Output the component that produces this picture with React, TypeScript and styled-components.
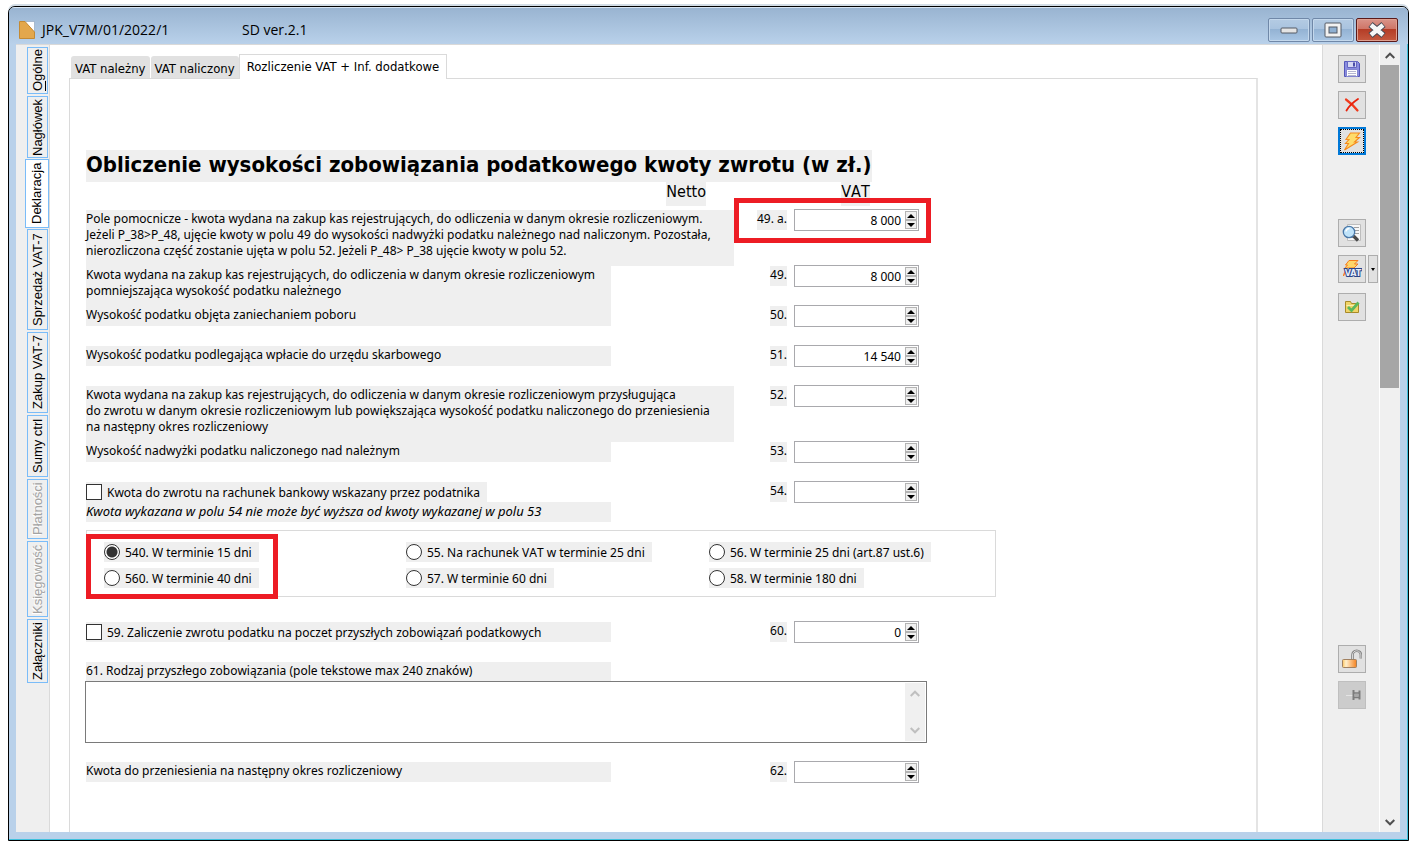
import React, { useState } from 'react';
import styled, { createGlobalStyle, css } from 'styled-components';

const uiFont = `"Noto Sans", Tahoma, sans-serif`;
const condensedFont = `"DejaVu Sans Condensed", "DejaVu Sans", Tahoma, sans-serif`;

const GlobalStyle = createGlobalStyle`
  * { box-sizing: border-box; }
  body { margin: 0; background: #fff; color: #000; font: 12px/16px ${uiFont}; font-kerning: none; }
  button, input, textarea { font: inherit; color: inherit; }
  button { padding: 0; }
`;

const Desktop = styled.div`
  display: flex;
  min-height: 100vh;
  padding: 6px 2px 12px 8px;
`;

const Window = styled.section`
  flex: 1;
  display: flex;
  flex-direction: column;
  min-width: 0;
  border: 1px solid #000;
  border-radius: 7px 7px 0 0;
  background: #b9d1ea;
  box-shadow: 0 -2px 0 #d3dde6;
  overflow: hidden;
`;

const TitleBar = styled.header`
  display: flex;
  align-items: center;
  height: 37px;
  padding: 8px 10px 0 10px;
  border-top: 1px solid #d5e3f2;
  background: linear-gradient(#99b4d1, #b9d1ea);
  font: 14px/20px "Open Sans", "Noto Sans", sans-serif;
  font-kerning: none;
`;

const WindowTitle = styled.h1`
  margin: 0 0 0 7px;
  width: 200px;
  font: inherit;
  font-kerning: none;
`;

const Version = styled.span`
  flex: 1;
`;

const WindowButtons = styled.div`
  display: flex;
  gap: 2px;
`;

const WindowButton = styled.button<{ $danger?: boolean }>`
  display: grid;
  place-items: center;
  width: 42px;
  height: 24px;
  border: 1px solid ${(p) => (p.$danger ? '#5a1a1a' : '#7088a8')};
  border-radius: 2px;
  box-shadow: inset 0 0 0 1px ${(p) => (p.$danger ? '#e0a090' : '#c4d8ec')};
  background: ${(p) =>
    p.$danger
      ? 'linear-gradient(#d9948a 0, #cf7567 45%, #b43c26 46%, #c55a40 100%)'
      : 'linear-gradient(#b4cbe3 0, #a9c3df 45%, #93b2d3 46%, #a9c6e4 100%)'};
`;

const Client = styled.div`
  flex: 1;
  display: flex;
  min-width: 0;
  margin: 0 7px 0 7px;
  border-top: 1px solid #d9d9d9;
  background: #fff;
`;

const Frame = styled.div`
  flex: 1;
  display: flex;
  min-width: 0;
  border-right: 1px solid #3fc0dc;
  border-bottom: 1px solid #3fc0dc;
  padding-bottom: 7px;
`;

const SideNav = styled.nav`
  display: flex;
  flex-direction: column;
  align-items: flex-end;
  gap: 2px;
  width: 34px;
  padding: 2px 1px 0 0;
  border-right: 1px solid #dadada;
  background: #efefef;
`;

const SideTab = styled.button<{ $height: number; $active?: boolean }>`
  width: 21px;
  height: ${(p) => p.$height}px;
  border: 1px solid #7abcf8;
  background: #efefef;
  writing-mode: vertical-rl;
  transform: rotate(180deg);
  font: 13px/19px "Liberation Sans", Arial, sans-serif;
  font-kerning: none;
  white-space: nowrap;
  &:disabled { color: #a3a3a3; text-shadow: -1px -1px 0 #fff; }
  ${(p) =>
    p.$active &&
    css`
      width: 24px;
      margin: -1px -1px -1px 0;
      padding-left: 2px;
      background: #fff;
    `}
`;

const Main = styled.main`
  flex: 1;
  display: flex;
  flex-direction: column;
  min-width: 0;
  padding: 9px 64px 0 19px;
`;

const Tabs = styled.div`
  position: relative;
  display: flex;
  align-items: flex-end;
  height: 25px;
  margin-bottom: -1px;
  padding-left: 1px;
`;

const Tab = styled.button<{ $active?: boolean }>`
  height: 22px;
  margin: 0 1px 1px 1px;
  padding: 3px 4px 0;
  border: 0;
  border-radius: 3px 3px 0 0;
  background: #e1e1e1;
  font: 13px/16px ${condensedFont};
  font-kerning: auto;
  white-space: nowrap;
  & + & { margin-left: 0; }
  ${(p) =>
    p.$active &&
    css`
      height: 25px;
      padding: 0 7px;
      border: 1px solid #dadada;
      border-bottom: 0;
      border-radius: 0;
      background: #fff;
      && { margin: 0 0 0 -1px; }
    `}
`;

const Sheet = styled.form`
  flex: 1;
  border: 1px solid #dadada;
  border-bottom: 0;
  border-right: 2px solid #e4e4e4;
  padding: 71px 16px 30px;
`;

const SheetTitle = styled.h2`
  width: fit-content;
  height: 32px;
  margin: 0;
  background: #efefef;
  font: bold 22px/30px ${condensedFont};
  font-kerning: none;
  white-space: nowrap;
`;

const Row = styled.div<{ $height?: number }>`
  position: relative;
  display: grid;
  grid-template-columns: 648px 53px 125px;
  align-items: start;
  min-height: ${(p) => p.$height ?? 40}px;
`;

const HeadRow = styled(Row)`
  font: 16px/20px ${condensedFont};
  font-kerning: none;
  span { height: 24px; background: #efefef; }
`;

const NettoHead = styled.span`
  justify-self: end;
  margin-right: 28px;
`;

const VatHead = styled.span`
  grid-column: 3;
  justify-self: center;
  margin-left: 12px;
`;

const Caption = styled.label<{ $wide?: boolean; $height?: number }>`
  display: block;
  width: ${(p) => (p.$wide ? 648 : 525)}px;
  height: ${(p) => p.$height ?? 20}px;
  padding-top: 1px;
  background: #efefef;
  white-space: pre;
`;

const Hint = styled(Caption)`
  font-size: 13px;
  font-style: italic;
`;

const Num = styled.label`
  justify-self: end;
  height: 20px;
  padding-top: 1px;
  background: #efefef;
`;

const FieldBox = styled.div`
  display: flex;
  width: 125px;
  height: 22px;
  margin: -1px -7px 0 7px;
  padding: 1px;
  border: 1px solid #a9a9ad;
  background: #fff;
`;

const FieldInput = styled.input`
  flex: 1;
  min-width: 0;
  padding: 2px 4px 0 0;
  border: 0;
  outline: 0;
  background: none;
  text-align: right;
`;

const Spinner = styled.div`
  display: flex;
  flex-direction: column;
  width: 12px;
`;

const SpinButton = styled.button`
  display: grid;
  place-items: center;
  flex: 1;
  min-height: 0;
  border: 1px solid #b4b4b4;
  background: #f0f0f0;
`;

const Choice = styled.label<{ $full?: boolean }>`
  display: flex;
  align-items: flex-start;
  gap: 5px;
  width: ${(p) => (p.$full ? '525px' : 'fit-content')};
  height: 20px;
  padding-right: 7px;
  background: #efefef;
  line-height: 22px;
  white-space: nowrap;
`;

const Tick = styled.input`
  appearance: none;
  width: 16px;
  height: 16px;
  margin: 2px 0;
  border: 1px solid #333;
  background: #fff;
  &[type='radio'] { border-radius: 50%; }
  &[type='radio']:checked { background: radial-gradient(circle, #333 0 5px, #fff 6px); }
  &[type='checkbox']:checked { box-shadow: inset 0 0 0 3px #fff; background: #333; }
`;

const Terms = styled.fieldset`
  position: relative;
  display: grid;
  grid-template-columns: 302px 303px 1fr;
  align-content: start;
  row-gap: 6px;
  width: 910px;
  height: 67px;
  margin: 8px 0 25px;
  padding: 11px 0 0 17px;
  border: 1px solid #dadada;
`;

const Marker = styled.span<{ $x: number; $y: number; $w: number; $h: number }>`
  position: absolute;
  left: ${(p) => p.$x}px;
  top: ${(p) => p.$y}px;
  width: ${(p) => p.$w}px;
  height: ${(p) => p.$h}px;
  border: 5px solid #ed1c24;
  pointer-events: none;
`;

const NoteBox = styled.div`
  display: flex;
  width: 842px;
  height: 62px;
  margin: -1px 0 19px -1px;
  padding: 1px;
  border: 1px solid #7a7a7a;
`;

const NoteArea = styled.textarea`
  flex: 1;
  padding: 2px;
  border: 0;
  outline: 0;
  resize: none;
`;

const NoteScroll = styled.div`
  display: flex;
  flex-direction: column;
  justify-content: space-between;
  align-items: center;
  width: 20px;
  padding: 7px 0;
  background: #f0f0f0;
`;

const ToolBar = styled.aside`
  display: flex;
  flex-direction: column;
  gap: 8px;
  width: 57px;
  padding: 10px 0 123px 15px;
  border-left: 1px solid #dadada;
  background: #efefef;
`;

const ToolGroup = styled.div<{ $top?: number; $end?: boolean }>`
  display: flex;
  flex-direction: column;
  gap: 8px;
  margin-top: ${(p) => (p.$end ? 'auto' : `${p.$top ?? 0}px`)};
`;

const SplitButton = styled.div`
  display: flex;
  gap: 2px;
  margin-bottom: 2px;
`;

const ToolButton = styled.button<{ $focused?: boolean }>`
  display: grid;
  place-items: center;
  width: 28px;
  height: 28px;
  border: 1px solid #adadad;
  background: #e1e1e1;
  &:disabled { border-color: #bfbfbf; background: #ccc; }
  ${(p) =>
    p.$focused &&
    css`
      border: 2px solid #0078d7;
      outline: 1px dotted #000;
      outline-offset: -3px;
    `}
`;

const DropButton = styled(ToolButton)`
  width: 10px;
`;

const ScrollTrack = styled.div`
  display: flex;
  flex-direction: column;
  align-items: center;
  width: 21px;
  border-left: 1px solid #fff;
  padding-right: 1px;
  background: #f0f0f0;
`;

const ScrollStep = styled.button`
  display: grid;
  place-items: center;
  width: 19px;
  height: 20px;
  border: 0;
  background: none;
`;

const ScrollThumb = styled.div`
  width: 19px;
  height: 41%;
  margin-bottom: auto;
  background: #a6a6a6;
`;

const Chevron = ({ down, color = '#505050' }: { down?: boolean; color?: string }) => (
  <svg width="10" height="7" viewBox="0 0 10 7" fill="none" stroke={color} strokeWidth="2">
    <path d={down ? 'M.7 1 5 5.3 9.3 1' : 'M.7 6 5 1.7 9.3 6'} />
  </svg>
);

const Arrow = ({ down }: { down?: boolean }) => (
  <svg width="8" height="4" viewBox="0 0 8 4">
    <path d={down ? 'M0 0h8L4 4z' : 'M0 4h8L4 0z'} />
  </svg>
);

const DocIcon = () => (
  <svg width="16" height="18" viewBox="0 0 16 18">
    <path d="M5 .5h10.500v11L10 6z" fill="#fff" stroke="#8aa0b8" strokeWidth=".6" />
    <path d="M.5.500h5.500L15.500 11v6.500H.5z" fill="#e3a74c" stroke="#c48a34" />
  </svg>
);

const SaveIcon = () => (
  <svg width="18" height="18" viewBox="0 0 18 18">
    <path d="M1.500 1.500h13l2 2v13h-15z" fill="#8a8de0" stroke="#5457b8" />
    <path d="M4.500 1.500h9v6h-9z" fill="#d5d8f4" stroke="#6467c0" />
    <path d="M10 2.500h2v4h-2z" fill="#4a4da8" />
    <path d="M3.500 9.500h11v7h-11z" fill="#fff" stroke="#8386d0" />
    <path d="M5 11.500h8M5 13.500h8M5 15.500h8" stroke="#b4b6d0" />
  </svg>
);

const DeleteIcon = () => (
  <svg width="16" height="16" viewBox="0 0 16 16" fill="none" strokeLinecap="round">
    <path d="M2 2.500C6 5.500 10 9 13.500 13.500" stroke="#f03a1c" strokeWidth="2.200" />
    <path d="M14 2C9.500 5 5 9 2.500 13.500" stroke="#e8220c" strokeWidth="1.800" />
  </svg>
);

const BoltIcon = () => (
  <svg width="18" height="19" viewBox="0 0 18 19">
    <path
      d="M7.500 1h9l-3.500 4.500h3.500L11.500 10h3L1.500 18 5.500 11.500H2.500L6 7.500H3z"
      fill="#ffdc6a"
      stroke="#f58a1c"
      strokeWidth="1.100"
    />
  </svg>
);

const PreviewIcon = () => (
  <svg width="20" height="20" viewBox="0 0 20 20">
    <path d="M5.500 1.500h13v16h-13z" fill="#f7f7f7" stroke="#bdbdbd" />
    <path d="M12 4.500h5M13 7.500h4M13 10.500h4M7 14.500h5" stroke="#a0a0a0" />
    <path d="m11.500 13 4.500 4.500" stroke="#4a4a4a" strokeWidth="3.200" />
    <circle cx="7" cy="9" r="5.700" fill="#bfe3fa" stroke="#4a78a8" strokeWidth="1.300" />
    <path d="M4 8.500A3.500 3.500 0 0 1 7.500 5.500" stroke="#fff" strokeWidth="1.500" fill="none" />
  </svg>
);

const VatIcon = () => (
  <svg width="20" height="20" viewBox="0 0 20 20">
    <path d="M7 1.500h9L12.500 5H16l-4 4H4.500l-3 8 2-7.500H2.500L5.500 6H3.500z" fill="#ffd66a" stroke="#f57c1c" />
    <text
      x="11"
      y="17"
      textAnchor="middle"
      fontFamily="DejaVu Sans Condensed, DejaVu Sans, sans-serif"
      fontSize="9"
      fontWeight="700"
      fill="#e6ecf8"
      stroke="#2a4488"
      strokeWidth="2"
      paintOrder="stroke"
      style={{ fontKerning: 'normal' }}
    >
      VAT
    </text>
  </svg>
);

const FolderIcon = () => (
  <svg width="16" height="16" viewBox="0 0 16 16">
    <path d="M1.500 2.500h5l1 2h7v9h-13z" fill="#f0d468" stroke="#a88a28" />
    <path d="M2.500 6.500h11" stroke="#fbeeb0" />
    <path d="m4 8 3.500 3.500L14.500 3.500" fill="none" stroke="#5cb85c" strokeWidth="2.800" />
  </svg>
);

const LockIcon = () => (
  <svg width="20" height="20" viewBox="0 0 20 20">
    <defs>
      <linearGradient id="lockBody">
        <stop offset="0" stopColor="#fbc25c" />
        <stop offset=".25" stopColor="#fff0cc" />
        <stop offset="1" stopColor="#f58220" />
      </linearGradient>
    </defs>
    <path d="M10.500 10V6a4.200 4.200 0 0 1 8.400 0v3.500" fill="none" stroke="#808080" strokeWidth="2.600" />
    <path d="M10.500 10V6a4.200 4.200 0 0 1 8.400 0v3.500" fill="none" stroke="#d8d8d8" strokeWidth="1" />
    <rect x=".5" y="10.500" width="14" height="8" rx="1" fill="url(#lockBody)" stroke="#a08060" />
  </svg>
);

const PinIcon = () => (
  <svg width="18" height="12" viewBox="0 0 18 12">
    <path d="M3 6.500h7" stroke="#e4e4e4" />
    <path d="M10.500 1v10M16.500 1.500v9" stroke="#7c7c7c" strokeWidth="2" />
    <path d="M11 4h5M11 8.500h5" stroke="#7c7c7c" strokeWidth="1.500" />
    <path d="M12 5h3v3h-3z" fill="#a8a8a8" />
  </svg>
);

const MinimizeIcon = () => (
  <svg width="18" height="8" viewBox="0 0 18 8">
    <rect x="1" y="2" width="16" height="5" rx="1" fill="#e4e4e4" stroke="#555a64" />
  </svg>
);

const MaximizeIcon = () => (
  <svg width="18" height="16" viewBox="0 0 18 16">
    <rect x="1" y="1" width="16" height="14" rx="1" fill="#f2f2f2" stroke="#555a64" />
    <rect x="5" y="5" width="8" height="6" fill="#8fb0d2" stroke="#555a64" />
  </svg>
);

const CloseIcon = () => (
  <svg width="20" height="16" viewBox="0 0 20 16" fill="none">
    <path d="m3.500 2.500 13 11m0-11-13 11" stroke="#4a4a55" strokeWidth="6.500" />
    <path d="m4 3 12 10m0-10-12 10" stroke="#f6f6f6" strokeWidth="4.500" />
  </svg>
);

const sideTabs = [
  { name: 'Ogólne', height: 47 },
  { name: 'Nagłówek', height: 62 },
  { name: 'Deklaracja', height: 69 },
  { name: 'Sprzedaż VAT-7', height: 101 },
  { name: 'Zakup VAT-7', height: 81 },
  { name: 'Sumy ctrl', height: 62 },
  { name: 'Płatności', height: 60, disabled: true },
  { name: 'Księgowość', height: 76, disabled: true },
  { name: 'Załączniki', height: 64 },
];

const terms = [
  '540. W terminie 15 dni',
  '55. Na rachunek VAT w terminie 25 dni',
  '56. W terminie 25 dni (art.87 ust.6)',
  '560. W terminie 40 dni',
  '57. W terminie 60 dni',
  '58. W terminie 180 dni',
];

function Amount({ no, initial = '' }: { no: string; initial?: string }) {
  const [value, setValue] = useState(initial);
  const id = `pole-${no.replace(/[ .]/g, '')}`;
  const step = (by: number) => {
    const next = (parseInt(value.replace(/\s/g, ''), 10) || 0) + by;
    setValue(String(next).replace(/\B(?=(\d{3})+$)/g, ' '));
  };
  return (
    <>
      <Num htmlFor={id}>{no}</Num>
      <FieldBox>
        <FieldInput id={id} value={value} onChange={(e) => setValue(e.target.value)} />
        <Spinner>
          <SpinButton type="button" aria-label="Zwiększ" onClick={() => step(1)}>
            <Arrow />
          </SpinButton>
          <SpinButton type="button" aria-label="Zmniejsz" onClick={() => step(-1)}>
            <Arrow down />
          </SpinButton>
        </Spinner>
      </FieldBox>
    </>
  );
}

export default function App() {
  const [term, setTerm] = useState(0);
  return (
    <>
      <GlobalStyle />
      <Desktop>
        <Window>
          <TitleBar>
            <DocIcon />
            <WindowTitle>JPK_V7M/01/2022/1</WindowTitle>
            <Version>SD ver.2.1</Version>
            <WindowButtons>
              <WindowButton aria-label="Minimalizuj"><MinimizeIcon /></WindowButton>
              <WindowButton aria-label="Maksymalizuj"><MaximizeIcon /></WindowButton>
              <WindowButton aria-label="Zamknij" $danger><CloseIcon /></WindowButton>
            </WindowButtons>
          </TitleBar>
          <Frame>
            <Client>
              <SideNav>
                {sideTabs.map((t) => (
                  <SideTab key={t.name} $height={t.height} $active={t.name === 'Deklaracja'} disabled={t.disabled}>
                    {t.name === 'Ogólne' ? <><u>O</u>gólne</> : t.name}
                  </SideTab>
                ))}
              </SideNav>
              <Main>
                <Tabs role="tablist">
                  <Tab role="tab">VAT należny</Tab>
                  <Tab role="tab">VAT naliczony</Tab>
                  <Tab role="tab" aria-selected $active>Rozliczenie VAT + Inf. dodatkowe</Tab>
                </Tabs>
                <Sheet>
                  <SheetTitle>Obliczenie wysokości zobowiązania podatkowego kwoty zwrotu (w zł.)</SheetTitle>
                  <HeadRow $height={28}>
                    <NettoHead>Netto</NettoHead>
                    <VatHead>VAT</VatHead>
                  </HeadRow>
                  <Row $height={56}>
                    <Caption $wide $height={56} htmlFor="pole-49a">
                      {'Pole pomocnicze - kwota wydana na zakup kas rejestrujących, do odliczenia w danym okresie rozliczeniowym.\nJeżeli P_38>P_48, ujęcie kwoty w polu 49 do wysokości nadwyżki podatku należnego nad naliczonym. Pozostała,\nnierozliczona część zostanie ujęta w polu 52. Jeżeli P_48> P_38 ujęcie kwoty w polu 52.'}
                    </Caption>
                    <Amount no="49. a." initial="8 000" />
                    <Marker $x={648} $y={-12} $w={197} $h={45} />
                  </Row>
                  <Row>
                    <Caption $height={40} htmlFor="pole-49">
                      {'Kwota wydana na zakup kas rejestrujących, do odliczenia w danym okresie rozliczeniowym\npomniejszająca wysokość podatku należnego'}
                    </Caption>
                    <Amount no="49." initial="8 000" />
                  </Row>
                  <Row>
                    <Caption htmlFor="pole-50">Wysokość podatku objęta zaniechaniem poboru</Caption>
                    <Amount no="50." />
                  </Row>
                  <Row>
                    <Caption htmlFor="pole-51">Wysokość podatku podlegająca wpłacie do urzędu skarbowego</Caption>
                    <Amount no="51." initial="14 540" />
                  </Row>
                  <Row $height={56}>
                    <Caption $wide $height={56} htmlFor="pole-52">
                      {'Kwota wydana na zakup kas rejestrujących, do odliczenia w danym okresie rozliczeniowym przysługująca\ndo zwrotu w danym okresie rozliczeniowym lub powiększająca wysokość podatku naliczonego do przeniesienia\nna następny okres rozliczeniowy'}
                    </Caption>
                    <Amount no="52." />
                  </Row>
                  <Row>
                    <Caption htmlFor="pole-53">Wysokość nadwyżki podatku naliczonego nad należnym</Caption>
                    <Amount no="53." />
                  </Row>
                  <Row>
                    <div>
                      <Choice>
                        <Tick type="checkbox" />
                        Kwota do zwrotu na rachunek bankowy wskazany przez podatnika
                      </Choice>
                      <Hint htmlFor="pole-54">Kwota wykazana w polu 54 nie może być wyższa od kwoty wykazanej w polu 53</Hint>
                    </div>
                    <Amount no="54." />
                  </Row>
                  <Terms aria-label="Termin zwrotu">
                    {terms.map((label, i) => (
                      <Choice key={label}>
                        <Tick type="radio" name="termin" checked={term === i} onChange={() => setTerm(i)} />
                        {label}
                      </Choice>
                    ))}
                    <Marker $x={-1} $y={3} $w={192} $h={65} />
                  </Terms>
                  <Row>
                    <Choice $full>
                      <Tick type="checkbox" />
                      59. Zaliczenie zwrotu podatku na poczet przyszłych zobowiązań podatkowych
                    </Choice>
                    <Amount no="60." initial="0" />
                  </Row>
                  <Caption htmlFor="pole-61">61. Rodzaj przyszłego zobowiązania (pole tekstowe max 240 znaków)</Caption>
                  <NoteBox>
                    <NoteArea id="pole-61" maxLength={240} />
                    <NoteScroll>
                      <Chevron color="#bfbfbf" />
                      <Chevron color="#bfbfbf" down />
                    </NoteScroll>
                  </NoteBox>
                  <Row>
                    <Caption htmlFor="pole-62">Kwota do przeniesienia na następny okres rozliczeniowy</Caption>
                    <Amount no="62." />
                  </Row>
                </Sheet>
              </Main>
              <ToolBar>
                <ToolGroup>
                  <ToolButton aria-label="Zapisz"><SaveIcon /></ToolButton>
                  <ToolButton aria-label="Anuluj"><DeleteIcon /></ToolButton>
                  <ToolButton aria-label="Przelicz" $focused><BoltIcon /></ToolButton>
                </ToolGroup>
                <ToolGroup $top={56}>
                  <ToolButton aria-label="Podgląd"><PreviewIcon /></ToolButton>
                  <SplitButton>
                    <ToolButton aria-label="Przelicz VAT"><VatIcon /></ToolButton>
                    <DropButton aria-label="Więcej">
                      <svg width="4" height="3" viewBox="0 0 4 3"><path d="M0 0h4L2 3z" /></svg>
                    </DropButton>
                  </SplitButton>
                  <ToolButton aria-label="Zatwierdź"><FolderIcon /></ToolButton>
                </ToolGroup>
                <ToolGroup $end>
                  <ToolButton aria-label="Odblokuj"><LockIcon /></ToolButton>
                  <ToolButton aria-label="Przypnij" disabled><PinIcon /></ToolButton>
                </ToolGroup>
              </ToolBar>
              <ScrollTrack>
                <ScrollStep aria-label="W górę"><Chevron /></ScrollStep>
                <ScrollThumb />
                <ScrollStep aria-label="W dół"><Chevron down /></ScrollStep>
              </ScrollTrack>
            </Client>
          </Frame>
        </Window>
      </Desktop>
    </>
  );
}
